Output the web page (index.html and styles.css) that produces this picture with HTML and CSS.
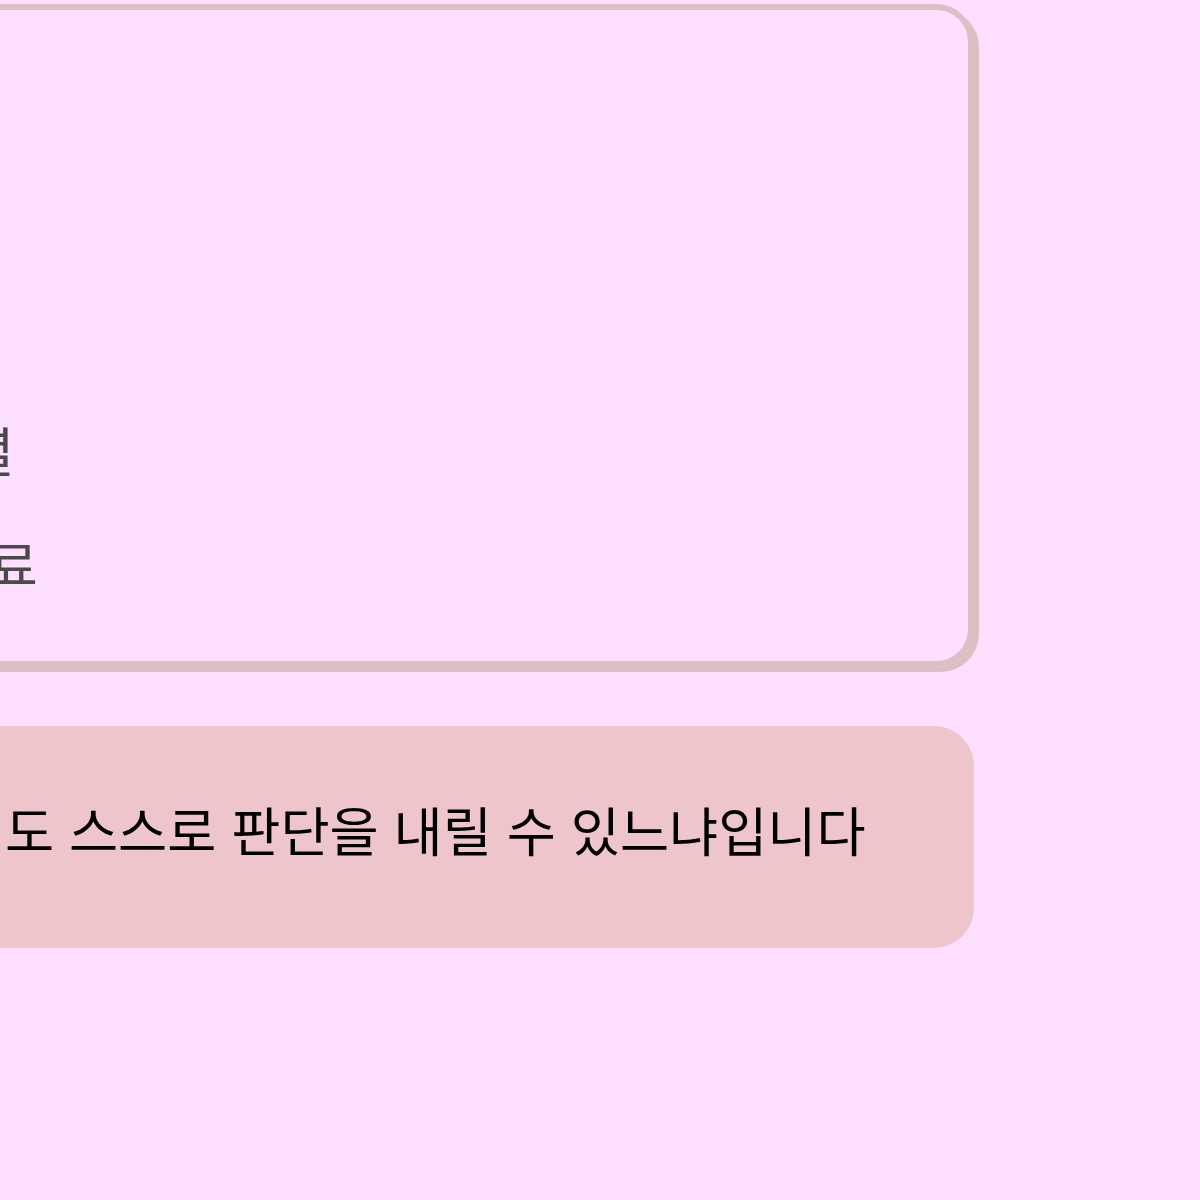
FILE: index.html
```html
<!DOCTYPE html>
<html lang="ko">
<head>
  <meta charset="UTF-8" />
  <meta name="viewport" content="width=device-width,initial-scale=1.0" />
  <title>학습 단계</title>
  <link rel="stylesheet" href="styles.css">
</head>
<body>
  <main class="page">
    <section class="card">
      <ol class="steps">
        <li>문제 정의</li>
        <li>데이터 수집</li>
        <li>전처리 과정</li>
        <li>입력데이터 정렬</li>
        <li>학습 및 평가 완료</li>
      </ol>
    </section>

    <p class="note">핵심은 사람 도움 없이도 스스로 판단을 내릴 수 있느냐입니다</p>
  </main>
</body>
</html>
```

FILE: styles.css
```css
* { margin: 0; padding: 0; box-sizing: border-box; }
body {
  font-family: "Noto Sans CJK KR", "Noto Sans", sans-serif;
  background: #ffdfff;
  color: #000;
  overflow: hidden;
}
.page {
  width: 1500px;
  margin-left: -526px;
  padding-top: 4px;
}
.card {
  height: 663px;
  border: 6px solid #dcbfc2;
  border-radius: 38px;
  box-shadow: 5px 5px 0 #dcbfc2;
  padding: 40px 0 0 172px;
}
.steps {
  list-style: none;
  font-size: 53px;
  line-height: 114px;
  color: #4a4a4a;
}
.steps li:nth-child(4) { word-spacing: 6px; }
.note {
  margin-top: 59px;
  height: 222px;
  background: #eec5ca;
  border-radius: 40px;
  padding: 66px 0 0 44px;
  font-size: 53.4px;
  line-height: 1.4;
}
```
